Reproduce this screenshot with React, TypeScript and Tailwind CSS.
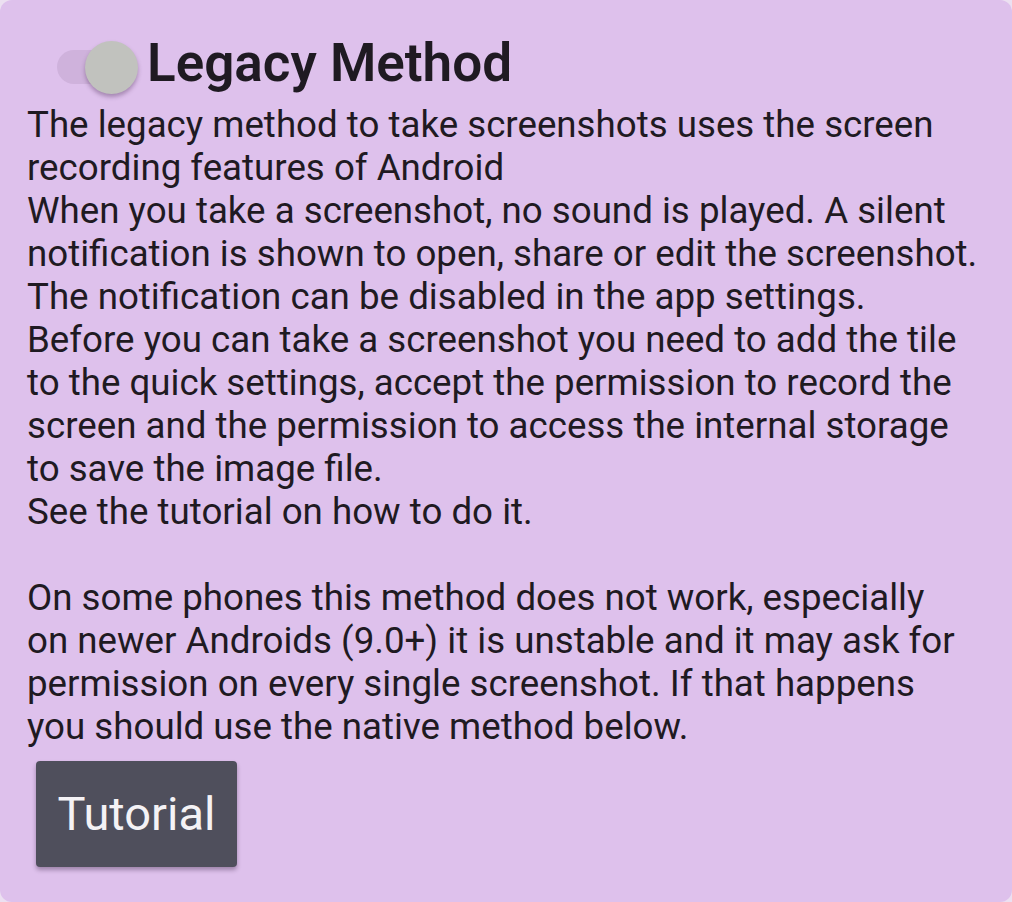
import React from 'react';

const LegacyCard = () => {
  return (
    <div className="h-[902px] w-[1012px] bg-[#ece0f1] font-['Roboto',sans-serif]">
      <div className="h-full w-full rounded-[12px] bg-[#dec1ec] pl-[27px] pr-2 pt-[40px]">
        <div className="flex items-start gap-[6px]">
          <div className="relative ml-[30px] h-[54px] w-[84px] shrink-0">
            <div className="absolute left-0 top-[10px] h-[34px] w-[62px] rounded-full bg-[#cfb2dc]" />
            <div className="absolute left-[28px] top-[1px] h-[53px] w-[53px] rounded-full bg-[#c1c2be] shadow-[0_3px_4px_rgba(60,30,70,0.35)]" />
          </div>
          <h1 className="text-[53px] font-semibold leading-[46px] text-[#1f1a22]">Legacy Method</h1>
        </div>
        <p className="mt-[9px] whitespace-pre-line text-[36.7px] leading-[43px] text-[#1f1a22]">
          {`The legacy method to take screenshots uses the screen
recording features of Android
When you take a screenshot, no sound is played. A silent
notification is shown to open, share or edit the screenshot.
The notification can be disabled in the app settings.
Before you can take a screenshot you need to add the tile
to the quick settings, accept the permission to record the
screen and the permission to access the internal storage
to save the image file.
See the tutorial on how to do it.

On some phones this method does not work, especially
on newer Androids (9.0+) it is unstable and it may ask for
permission on every single screenshot. If that happens
you should use the native method below.`}
        </p>
        <button className="ml-[9px] mt-[13px] h-[106px] w-[201px] rounded-[4px] bg-[#4f4f5c] text-[47px] text-[#f4f2f5] shadow-[0_3px_4px_rgba(40,20,50,0.35)]">
          Tutorial
        </button>
      </div>
    </div>
  );
};

export default function App() {
  return <LegacyCard />;
}
